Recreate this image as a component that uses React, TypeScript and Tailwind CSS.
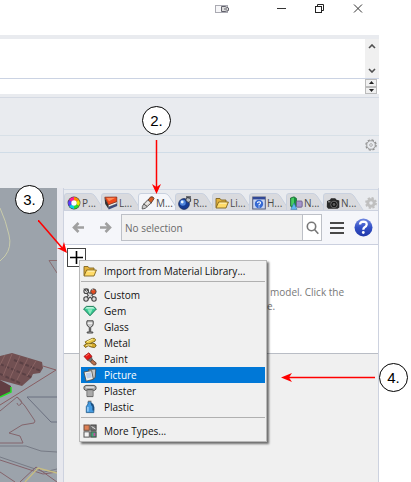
import type { ReactNode } from "react";

const ink = "#454545";

function Svg({ children, size = 14 }: { children: ReactNode; size?: number }) {
  return (
    <svg width={size} height={size} viewBox="0 0 14 14" fill="none" className="shrink-0" aria-hidden="true">
      {children}
    </svg>
  );
}

function FolderIcon() {
  return (
    <Svg>
      <path d="M1 11.5V2.5H5L6.2 4H11V6" fill="#e3b23c" stroke="#80641f" strokeWidth=".9" />
      <path d="M1 12L3.6 6H13.4L11 12Z" fill="#ffdb68" stroke="#80641f" strokeWidth=".9" strokeLinejoin="round" />
      <path d="M4.5 7.2H11.5" stroke="#fff2bd" />
    </Svg>
  );
}

function ColorWheelIcon() {
  return (
    <svg width="14" height="14" viewBox="-7 -7 14 14" className="shrink-0" aria-hidden="true">
      <circle r="6.4" fill="#444" />
      <g fill="none" strokeWidth="3.4">
        <path d="M0 -4.2A4.2 4.2 0 0 1 3.6 -2.1" stroke="#ff8a00" />
        <path d="M3.6 -2.1A4.2 4.2 0 0 1 3.6 2.1" stroke="#e8e800" />
        <path d="M3.6 2.1A4.2 4.2 0 0 1 0 4.2" stroke="#2bdc2b" />
        <path d="M0 4.2A4.2 4.2 0 0 1 -3.6 2.1" stroke="#00cfe8" />
        <path d="M-3.6 2.1A4.2 4.2 0 0 1 -3.6 -2.1" stroke="#5a3cff" />
        <path d="M-3.6 -2.1A4.2 4.2 0 0 1 0 -4.2" stroke="#ff1f8f" />
      </g>
      <circle r="2.7" fill="#fff" />
    </svg>
  );
}

function LayersIcon() {
  return (
    <Svg>
      <path d="M.5 1.5L4.5 8.5L4.7 13.2L1.2 8Z" fill="#333" />
      <path d="M4.5 10.5L13.2 7.5V10L4.7 13.4Z" fill="#3c4c7c" />
      <path d="M4.5 8.5L13 5.5V7.6L4.5 11Z" fill="#f3f3f3" stroke="#444" strokeWidth=".5" />
      <path d="M.8 1.2L12.8 1V5.6L4.5 8.8Z" fill="#f04a1c" stroke="#7d2a12" strokeWidth=".7" />
      <path d="M2.5 2L11.5 1.8L5 5.2Z" fill="#ff8a56" />
    </Svg>
  );
}

function BrushIcon() {
  return (
    <Svg>
      <path d="M6.6 4.6L9.6 .9Q12.6 .2 13 2.6L9.8 7.6Z" fill="#d85b22" stroke="#5c3320" strokeWidth=".9" />
      <path d="M2.8 8L6.8 3.8L10.2 7L6.2 10.6Z" fill="#d8d4d0" stroke="#555" strokeWidth=".9" />
      <path d="M2.8 8Q.8 10 1.2 13Q4.6 13 6.2 10.6Z" fill="#c9c9c9" stroke="#555" strokeWidth=".9" />
      <path d="M5 8.6L7.8 5.8" stroke="#fff" />
    </Svg>
  );
}

function RenderIcon() {
  return (
    <Svg>
      <circle cx="6" cy="8" r="5.4" fill="#153c94" stroke="#172750" strokeWidth=".7" />
      <circle cx="4.8" cy="6.8" r="3" fill="#4f86dd" />
      <circle cx="4.2" cy="6" r="1.4" fill="#e8f4ff" />
      <path d="M7.6 4L9.3 1.6L12.6 2.5V5.4L10 6.5Z" fill="#b9bdc3" stroke="#30343c" strokeWidth=".9" />
      <path d="M8 1H13" stroke="#30343c" strokeWidth="1.3" />
    </Svg>
  );
}

function HelpPageIcon() {
  return (
    <Svg>
      <rect x=".7" y="1" width="12.6" height="12" fill="#c8d5f1" stroke="#555d7c" />
      <rect x="1" y="1" width="12" height="2.4" fill="#314897" />
      <circle cx="7" cy="8" r="4.2" fill="#3568d2" />
      <path d="M5.4 7.1Q5.5 5.7 7 5.7Q8.7 5.8 8.5 7.2Q8.2 8.2 7 8.8V9.5M7 10.4V11.4" stroke="#fff" strokeWidth="1.1" />
    </Svg>
  );
}

function NamedViewIcon() {
  return (
    <Svg>
      <path d="M1.5 2L5 .8L7.5 2.4V10L3.5 12L1.5 10Z" fill="#16923c" stroke="#176231" strokeWidth=".7" />
      <path d="M2.2 2.4L5 1.6V9L2.2 9.8Z" fill="#48cc62" />
      <rect x="7.4" y="5" width="5.8" height="6.2" rx="1" fill="#a493cd" stroke="#63597e" strokeWidth=".8" />
      <path d="M5 7L8 13.4H1.8Z" fill="#62b8f4" stroke="#3675a5" strokeWidth=".6" />
    </Svg>
  );
}

function CameraIcon() {
  return (
    <Svg>
      <path d="M1 5L4 3.8L5 2.2H9.2L10.5 3.8L13.3 4.5V11.5L11.5 12.8H2.2L.8 11Z" fill="#292929" />
      <circle cx="8" cy="8.5" r="3.3" fill="#151515" stroke="#888" strokeWidth=".7" />
      <circle cx="8" cy="8.5" r="1.4" fill="#5d5d5d" />
      <path d="M2 5.8H4.4" stroke="#aaa" />
    </Svg>
  );
}

function CustomIcon() {
  return (
    <Svg>
      <path d="M4.2 4.4L11 11.2M9.8 4.4L3.5 11" stroke={ink} strokeWidth="3.4" />
      <path d="M4.2 4.4L11 11.2M9.8 4.4L3.5 11" stroke="#ddd" strokeWidth="1.5" />
      <g fill="#ddd" stroke={ink} strokeWidth="1.1">
        <circle cx="3.2" cy="3.2" r="2.3" />
        <circle cx="3" cy="11" r="2.2" />
        <circle cx="11" cy="11" r="2.2" />
      </g>
      <path d="M1 .6L3.5 3.6M5 .8L4.2 3" stroke={ink} />
      <circle cx="10.4" cy="3.6" r="2.7" fill="#e24b20" stroke="#454545" strokeWidth="1" />
      <path d="M8.6 .8L10 2.4" stroke="#ccc" />
    </Svg>
  );
}

function GemIcon() {
  return (
    <Svg>
      <path d="M.6 5L3.4 2.4H10.6L13.4 5L7 11.8Z" fill="#35c792" stroke="#16724f" strokeWidth=".9" />
      <path d="M3.8 3H10.1L11.8 4.8H2Z" fill="#b7f5d9" />
      <path d="M4.3 5.2L7 10.5L9.6 5.2Z" fill="#8deabf" />
    </Svg>
  );
}

function GlassIcon() {
  return (
    <Svg>
      <path d="M4 .8H10.1L10.3 3.8Q10 6.6 7.7 7.2V12H9.8V13H4.2V12H6.3V7.2Q4.1 6.6 3.7 3.8Z" fill="#c8c8c8" stroke="#484848" />
      <path d="M4.8 3.2H9.2" stroke="#fff" />
    </Svg>
  );
}

function MetalIcon() {
  return (
    <Svg>
      <path d="M2.2 5.8L9.2 2.4Q12 1.7 12.5 3.6L12 5.2L5.2 8.4Q2.5 8.3 2.2 5.8Z" fill="#e5c545" stroke="#786219" strokeWidth=".9" />
      <path d="M.8 9.5Q3.5 7 6.4 8.1L9.4 7.2Q12.8 7.1 13.2 10L11.6 11.5L8.4 11.1L5.2 9.7L2.5 11.5Z" fill="#d6ab2c" stroke="#705914" strokeWidth=".9" />
      <path d="M4 5.7L9.8 3.1M3 9.4L6 8.8L9 9.2" stroke="#fff09d" />
    </Svg>
  );
}

function PaintIcon() {
  return (
    <Svg>
      <path d="M7.7 9L9.2 7.6L13.2 10.9L12.7 12.8L10.8 13L7.7 10.4Z" fill="#b9714d" stroke="#593427" strokeWidth=".8" />
      <path d="M4.4 8.2L8.6 5.2L9.2 7.8L7.2 9.6Z" fill="#777" stroke="#444" strokeWidth=".7" />
      <path d="M1 4.4L5.8 .8L9 4.4L4.3 8Z" fill="#e61818" stroke="#971414" strokeWidth=".8" />
      <path d="M3 4.1L6 2" stroke="#ff725c" />
    </Svg>
  );
}

function PictureIcon() {
  return (
    <Svg>
      <path d="M5.5 1.4L12.8 1L12.2 9.5L9.5 11.5Z" fill="#c4c4c4" stroke="#454545" strokeWidth=".8" />
      <path d="M.9 4L8.6 2.6L10.4 11.3L3.2 13.2Z" fill="#efefe9" stroke="#454545" strokeWidth=".8" />
      <path d="M2.8 5.2L7.9 4.3L8.9 9.4L4 10.6Z" fill="#b9cdea" />
    </Svg>
  );
}

function PlasterIcon() {
  return (
    <Svg>
      <path d="M4 5.8H10V12.6H4Z" fill="#cfcfcf" stroke="#616161" />
      <path d="M6 6V12.4M8 6V12.4" stroke="#858585" />
      <path d="M3 1.4H11L13 2.6V5.2L11 6.6L9.5 5.4H4.5L3 6.6L1 5.2V2.6Z" fill="#b2b2b2" stroke="#555" />
      <path d="M3 3.2H11" stroke="#eee" />
    </Svg>
  );
}

function PlasticIcon() {
  return (
    <Svg>
      <path d="M5 1.6H8V4L10.8 7V12.6H3.3V6.6L5 4Z" fill="#459be0" stroke="#1e5889" strokeWidth=".8" />
      <path d="M8 2.6Q11 3.8 11.2 6.6V10.5H9.4V6.5L8 5" fill="#1c5081" />
      <path d="M4.9 7V11.5" stroke="#a9d8ff" strokeWidth="1.3" />
      <path d="M5 1.2H8.4" stroke="#777" />
    </Svg>
  );
}

function MoreIcon() {
  return (
    <Svg>
      <rect x="1" y="1" width="5.3" height="5.3" fill="#df8054" stroke="#6d4d3d" />
      <rect x="7.8" y="1" width="5.3" height="5.3" fill="#777" stroke="#444" />
      <rect x="1" y="7.8" width="5.3" height="5.3" fill="#f4f4f4" stroke="#555" />
      <rect x="7.8" y="7.8" width="5.3" height="5.3" fill="#42a976" stroke="#444" />
      <path d="M8.5 2.5L12.5 5" stroke="#ddd" />
      <path d="M10.5 9H12.3V12H10.5Z" fill="#c24fa4" />
    </Svg>
  );
}

function GearIcon({ solid = false }: { solid?: boolean }) {
  return (
    <Svg size={12}>
      {solid ? (
        <>
          <circle cx="7" cy="7" r="3.8" stroke="#bfbfbf" strokeWidth="3.4" />
          <circle cx="7" cy="7" r="5.9" stroke="#bfbfbf" strokeWidth="2" strokeDasharray="2.6 2.03" />
        </>
      ) : (
        <>
          <circle cx="7" cy="7" r="5" stroke="#8f8f8f" />
          <circle cx="7" cy="7" r="6" stroke="#8f8f8f" strokeWidth="1.4" strokeDasharray="2.7 2" />
          <circle cx="7" cy="7" r="1.6" stroke="#a5a5a5" />
        </>
      )}
    </Svg>
  );
}

const tabs = [
  { label: "P...", icon: <ColorWheelIcon /> },
  { label: "L...", icon: <LayersIcon /> },
  { label: "M...", icon: <BrushIcon />, active: true },
  { label: "R...", icon: <RenderIcon /> },
  { label: "Li...", icon: <FolderIcon /> },
  { label: "H...", icon: <HelpPageIcon /> },
  { label: "N...", icon: <NamedViewIcon /> },
  { label: "N...", icon: <CameraIcon /> },
];

const materials = [
  { label: "Custom", icon: <CustomIcon /> },
  { label: "Gem", icon: <GemIcon /> },
  { label: "Glass", icon: <GlassIcon /> },
  { label: "Metal", icon: <MetalIcon /> },
  { label: "Paint", icon: <PaintIcon /> },
  { label: "Picture", icon: <PictureIcon />, active: true },
  { label: "Plaster", icon: <PlasterIcon /> },
  { label: "Plastic", icon: <PlasticIcon /> },
];

function Tab({ label, icon, active = false }: { label: string; icon: ReactNode; active?: boolean }) {
  return (
    <button type="button" role="tab" aria-selected={active} className="relative flex h-[17px] w-[37px] shrink-0 items-center pl-[3px] pt-0.5">
      <svg className="absolute left-0 top-0" width="42" height="17" viewBox="0 0 42 17" aria-hidden="true">
        <path d="M.5 17V3Q.5 .5 3 .5H27Q29 .5 31 3L40 17" fill={active ? "#f5f6fa" : "#d9dade"} stroke="#c9d1df" />
      </svg>
      <span className="relative flex items-center gap-px whitespace-nowrap text-[#4a4a4a]">
        {icon}
        <span>{label}</span>
      </span>
    </button>
  );
}

function MenuItem({ label, icon, active = false }: { label: string; icon: ReactNode; active?: boolean }) {
  return (
    <button
      type="button"
      role="menuitem"
      className={`flex h-4 w-full items-center gap-[7px] pl-0.5 text-left ${active ? "bg-[#0078d7] text-white" : "text-[#111]"}`}
    >
      {icon}
      <span className="whitespace-nowrap">{label}</span>
    </button>
  );
}

function MaterialMenu() {
  return (
    <div role="menu" className="absolute left-3 top-3 z-10 w-[188px] border border-[#b8b8b8] bg-[#f0f0f0] px-px pb-0.5 shadow-[2px_2px_2px_rgba(0,0,0,0.55)]">
      <div className="border-b border-[#b0b0b0] pb-0.5 pt-0.5">
        <MenuItem label="Import from Material Library..." icon={<FolderIcon />} />
      </div>
      <div className="border-b border-[#b0b0b0] pb-0.5 pt-[5px]">
        {materials.map((item) => (
          <MenuItem key={item.label} {...item} />
        ))}
      </div>
      <div className="pt-[5px]">
        <MenuItem label="More Types..." icon={<MoreIcon />} />
      </div>
    </div>
  );
}

function TitleBar() {
  return (
    <header className="flex h-[35px] justify-end gap-[22px] pr-[13px] pt-0.5">
      <button type="button" aria-label="Touch input" className="mr-[22px] h-3.5 w-4">
        <svg width="16" height="14" viewBox="0 0 16 14" fill="none">
          <rect x="1.5" y="3.5" width="12" height="7" fill="#f6f6f8" stroke="#aaaab2" />
          <path d="M7.5 4.5H11L14.5 6V8.5L11 9.5H7.5Z" fill="#ddd" stroke="#62626c" />
          <path d="M10 7H13" stroke="#62626c" />
        </svg>
      </button>
      <button type="button" aria-label="Minimize" className="h-3.5 w-4">
        <svg width="16" height="14"><path d="M3 6.5H12" stroke="#333" /></svg>
      </button>
      <button type="button" aria-label="Restore" className="h-3.5 w-4">
        <svg width="16" height="14" fill="none" stroke="#222">
          <rect x="3.5" y="4.5" width="6" height="6" />
          <path d="M5.5 4V2.5H11.5V8.5H10" />
        </svg>
      </button>
      <button type="button" aria-label="Close" className="h-3.5 w-4">
        <svg width="16" height="14"><path d="M4 2.5L12 10.5M12 2.5L4 10.5" stroke="#333" /></svg>
      </button>
    </header>
  );
}

function CommandArea() {
  return (
    <section className="border-t-4 border-[#e9ebef]" aria-label="Command">
      <div className="flex h-10 border-b border-[#cbd3e3]">
        <div className="flex-1 bg-white" />
        <div className="flex w-3.5 flex-col items-center justify-between bg-[#f0f0f0] py-[5px]">
          <button type="button" aria-label="Scroll up">
            <svg width="8" height="5" className="block" fill="none" stroke="#505050" strokeWidth="1.6"><path d="M1 4L4 1L7 4" /></svg>
          </button>
          <button type="button" aria-label="Scroll down">
            <svg width="8" height="5" className="block" fill="none" stroke="#505050" strokeWidth="1.6"><path d="M1 1L4 4L7 1" /></svg>
          </button>
        </div>
      </div>
      <div className="flex h-[15px] pr-0.5">
        <input aria-label="Command prompt" className="min-w-0 flex-1 bg-white outline-none" />
        <div className="flex w-3 flex-col">
          <button type="button" aria-label="Previous command" className="flex flex-1 items-center justify-center border border-[#bbb] bg-[#f0f0f0]">
            <svg width="5" height="3"><path d="M0 3L2.5 0L5 3Z" fill="#222" /></svg>
          </button>
          <button type="button" aria-label="Next command" className="flex flex-1 items-center justify-center border border-[#bbb] bg-[#f0f0f0]">
            <svg width="5" height="3"><path d="M0 0L2.5 3L5 0Z" fill="#222" /></svg>
          </button>
        </div>
      </div>
      <div className="h-1 border-b border-[#d5dae3] bg-[#e9ebef]" />
    </section>
  );
}

function Viewport() {
  return (
    <section aria-label="Viewport" className="relative flex-1 overflow-hidden bg-[#9ca3ab]">
      <svg width="57" height="294" viewBox="0 0 57 294" fill="none" className="block">
        <path d="M0 20Q6 33 9 47Q12 59 5 68L0 73" stroke="#c9ccaa" />
        <path d="M57 72.5H49L57 85" stroke="#8b6c70" />
        <path d="M0 168L12 165L42 174L43 180L40 185L33 186L31 190L22 198L0 192Z" fill="#715052" />
        <path d="M14 172L41 183M0 176L33 190M0 186L22 196" stroke="#5a4044" strokeWidth="2" strokeDasharray="4 2" />
        <path d="M5 167L0 177M12 166L3 188M20 168L10 190M28 170L17 192M36 173L27 188" stroke="#8a6464" />
        <path d="M0 192L11 198L11 204L0 209Z" fill="#613e42" />
        <path d="M0 209L11 204V199" stroke="#23df26" strokeWidth="1.5" />
        <path d="M43 178L56 182L0 217" stroke="#885e62" />
        <path d="M0 223L17 209L25 218L35 233L34 235L22 237L9 245L20 248L23 255H0" stroke="#83656c" />
        <path d="M17 209Q23 213 21 216Q18 219 17 215" stroke="#83656c" />
        <path d="M57 209H27L51 234H57" stroke="#6b7080" />
        <path d="M0 258H26L41 263L57 264M0 269L44 284L57 281" stroke="#777b86" />
        <path d="M0 272L43 286L57 284M20 294L36 279L57 294M0 284L15 294" stroke="#84636b" />
        <path d="M25 294L38 280L57 285" stroke="#c7bd82" strokeWidth="1.3" />
      </svg>
    </section>
  );
}

function Toolbar() {
  return (
    <div className="flex h-[34px] items-center border-b border-[#cbd0df] bg-[#f5f6fa] pl-2 pr-[5px]">
      <button type="button" aria-label="Back" className="w-7">
        <svg width="12" height="11" fill="none" stroke="#a0a0a0" strokeWidth="2.6"><path d="M12 5.5H2M6.5 1L2 5.5L6.5 10" /></svg>
      </button>
      <button type="button" aria-label="Forward" className="w-[21px]">
        <svg width="12" height="11" fill="none" stroke="#a0a0a0" strokeWidth="2.6"><path d="M0 5.5H10M5.5 1L10 5.5L5.5 10" /></svg>
      </button>
      <div className="flex h-[27px] flex-1 border border-[#bdc0c7]">
        <input aria-label="Selected material" readOnly value="No selection" className="min-w-0 flex-1 bg-[#f1f1f1] px-[3px] text-[#6a6a6a] outline-none" />
        <button type="button" aria-label="Search" className="flex w-[19px] items-center justify-center border-l border-[#bdc0c7] bg-white">
          <svg width="13" height="14" fill="none" stroke="#777" strokeWidth="1.6"><circle cx="5.5" cy="5.5" r="4.2" /><path d="M8.5 8.5L12.3 12.8" /></svg>
        </button>
      </div>
      <button type="button" aria-label="Menu" className="ml-2 w-[14px]">
        <svg width="14" height="14" stroke="#484848" strokeWidth="2"><path d="M0 2H14M0 7H14M0 12H14" /></svg>
      </button>
      <button type="button" aria-label="Help" className="ml-2.5">
        <svg width="19" height="19" viewBox="0 0 19 19" fill="none" className="block">
          <defs>
            <linearGradient id="helpFill" x1="0" y1="0" x2="0" y2="1">
              <stop stopColor="#7188e0" />
              <stop offset=".5" stopColor="#3350c6" />
              <stop offset="1" stopColor="#2038a8" />
            </linearGradient>
          </defs>
          <circle cx="9.5" cy="9.5" r="9" fill="url(#helpFill)" />
          <path d="M6 6.5Q6.2 3.7 9.3 3.7Q12.8 3.8 12.7 6.6Q12.4 8.4 10.6 9.2Q9.3 10 9.3 11.8" stroke="#fff" strokeWidth="2.3" />
          <circle cx="9.3" cy="14.5" r="1.4" fill="#fff" />
        </svg>
      </button>
    </div>
  );
}

function MaterialsPanel() {
  return (
    <section aria-label="Materials" className="flex w-[316px] shrink-0 flex-col border-x border-[#cdd2df] bg-[#f0f0f0]">
      <div className="flex h-[23px] items-end border-b border-[#cdd2df] bg-[#e9ebef]">
        <div className="flex h-[21px] flex-1 items-end justify-between border-t border-[#d2d9e5]">
          <div role="tablist" className="flex">
            {tabs.map((tab, index) => (
              <Tab key={index} {...tab} />
            ))}
          </div>
          <button type="button" aria-label="Panel options" className="mb-px mr-px"><GearIcon solid /></button>
        </div>
      </div>
      <Toolbar />
      <div className="h-[109px] border-b border-[#b9bdc5] bg-white pl-[3px] pt-[3px]">
        <div className="relative flex">
          <button type="button" aria-label="Add material" className="flex size-[19px] shrink-0 items-center justify-center border border-[#444] bg-white">
            <svg width="13" height="13" stroke="#000" strokeWidth="1.6"><path d="M0 6.5H13M6.5 0V13" /></svg>
          </button>
          <p className="flex-1 whitespace-nowrap pl-[181px] pt-[37px] leading-[14px] text-[#777]">
            <span className="block pl-[3px]">model. Click the</span>
            <span className="block">e.</span>
          </p>
          <MaterialMenu />
        </div>
      </div>
    </section>
  );
}

function Callout({ label, className }: { label: string; className: string }) {
  return (
    <span className={`absolute z-20 flex size-[29px] items-center justify-center rounded-full border border-black bg-white font-['Liberation_Sans',sans-serif] text-[15px] leading-4 text-black ${className}`}>
      {label}
    </span>
  );
}

export default function App() {
  return (
    <main className="relative min-h-screen overflow-hidden bg-white pr-8 font-['Open_Sans','Noto_Sans',sans-serif] text-[10px] leading-4">
      <div className="flex min-h-screen flex-col">
        <TitleBar />
        <CommandArea />
        <div className="h-[38px] border-b border-[#d8e0e7] bg-[#e9ebef]" />
        <div className="flex h-[17px] items-center justify-end border-b border-[#d0dce7] bg-[#e9ebef] pr-0.5 pt-px">
          <button type="button" aria-label="Toolbar options"><GearIcon /></button>
        </div>
        <div className="h-[35px] bg-[#e9ebef]" />
        <div className="flex flex-1 gap-1.5 bg-[#e7e8ee]">
          <Viewport />
          <MaterialsPanel />
        </div>
      </div>
      <Callout label="2." className="left-[142px] top-[106px]" />
      <Callout label="3." className="left-[15px] top-[185px]" />
      <Callout label="4." className="left-[379px] top-[363px]" />
      <svg className="absolute left-[151px] top-[140px] z-20" width="11" height="55" aria-hidden="true">
        <path d="M5.5 0V48" stroke="#f00" strokeWidth="1.5" />
        <path d="M1 44L5.5 54L10 44L5.5 47Z" fill="#f00" />
      </svg>
      <svg className="absolute left-[38px] top-[220px] z-20" width="30" height="34" aria-hidden="true">
        <path d="M0 0L25 29" stroke="#f00" strokeWidth="1.5" />
        <path d="M29 33L19 28L24 28L26 22Z" fill="#f00" />
      </svg>
      <svg className="absolute left-[281px] top-[372px] z-20" width="94" height="11" aria-hidden="true">
        <path d="M94 5.5H6" stroke="#f00" strokeWidth="1.5" />
        <path d="M0 5.5L11 1L8 5.5L11 10Z" fill="#f00" />
      </svg>
    </main>
  );
}
